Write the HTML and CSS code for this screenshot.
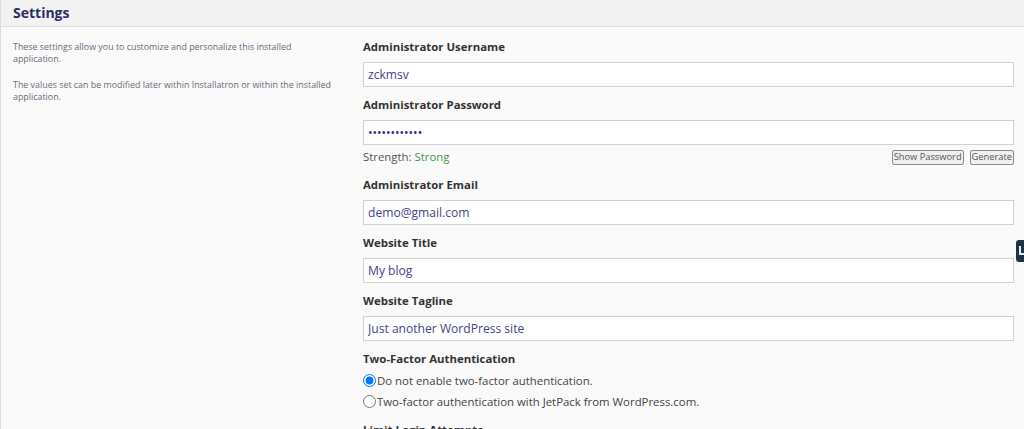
FILE: index.html
```html
<!DOCTYPE html>
<html lang="en">
<head>
    <meta charset="UTF-8">
    <meta name="viewport" content="width=device-width, initial-scale=1.0">
    <title>Settings</title>
    <link rel="stylesheet" href="styles.css">
</head>
<body>
    <div class="panel">
        <div class="panel-header">
            <h2>Settings</h2>
        </div>

        <div class="panel-body">
            <div class="description">
                <p>These settings allow you to customize and personalize this installed application.</p>
                <p>The values set can be modified later within Installatron or within the installed application.</p>
            </div>

            <div class="fields">
                <div class="field">
                    <label for="admin-user">Administrator Username</label>
                    <input type="text" id="admin-user" value="zckmsv">
                </div>

                <div class="field">
                    <label for="admin-pass">Administrator Password</label>
                    <input type="password" id="admin-pass" value="demopassword">
                    <div class="strength-row">
                        <span>Strength: <span class="strong">Strong</span></span>
                        <div class="pass-buttons">
                            <button type="button">Show Password</button>
                            <button type="button">Generate</button>
                        </div>
                    </div>
                </div>

                <div class="field">
                    <label for="admin-email">Administrator Email</label>
                    <input type="text" id="admin-email" value="demo@gmail.com">
                </div>

                <div class="field">
                    <label for="site-title">Website Title</label>
                    <input type="text" id="site-title" value="My blog">
                </div>

                <div class="field">
                    <label for="site-tagline">Website Tagline</label>
                    <input type="text" id="site-tagline" value="Just another WordPress site">
                </div>

                <div class="field">
                    <label>Two-Factor Authentication</label>
                    <div class="radio-list">
                        <div class="radio-row">
                            <input type="radio" name="twofa" id="twofa-off" checked>
                            <span>Do not enable two-factor authentication.</span>
                        </div>
                        <div class="radio-row">
                            <input type="radio" name="twofa" id="twofa-jetpack">
                            <span>Two-factor authentication with JetPack from WordPress.com.</span>
                        </div>
                    </div>
                </div>

                <div class="field">
                    <label>Limit Login Attempts</label>
                </div>
            </div>
        </div>
    </div>

    <div class="side-tab"><span class="side-tab-icon"></span></div>
</body>
</html>
```

FILE: styles.css
```css
body {
    margin: 0;
    font-family: 'Open Sans', 'Noto Sans', sans-serif;
    background-color: #fafafa;
    color: #333;
    overflow: hidden;
    height: 429px;
}

.panel {
    border-left: 1px solid #dcdcdc;
    height: 429px;
    overflow: hidden;
}

.panel-header {
    background-color: #f2f2f2;
    border-bottom: 1px solid #dedede;
    height: 26px;
    padding: 0 12px;
}

.panel-header h2 {
    margin: 0;
    font-size: 14px;
    line-height: 25px;
    font-weight: bold;
    color: #2b2c6b;
}

.panel-body {
    display: flex;
    padding: 12px 10px 0 12px;
}

.description {
    width: 322px;
    margin-right: 28px;
    flex-shrink: 0;
    padding-top: 2px;
}

.description p {
    margin: 0 0 15px 0;
    font-size: 8.9px;
    line-height: 11.5px;
    color: #6b6b78;
}

.fields {
    flex: 1;
}

.field {
    margin-bottom: 10px;
}

.field label {
    display: block;
    font-size: 11.4px;
    font-weight: bold;
    line-height: 16px;
    color: #333;
    margin-bottom: 7px;
}

.field input[type="text"],
.field input[type="password"] {
    display: block;
    box-sizing: border-box;
    width: 100%;
    height: 25px;
    padding: 0 4px;
    border: 1px solid #d2d2d2;
    background-color: white;
    font-family: inherit;
    font-size: 12.1px;
    color: #44448a;
    outline: none;
}

.field input[type="password"] {
    font-size: 12px;
    color: #2a2a80;
}

.strength-row {
    display: flex;
    justify-content: space-between;
    align-items: center;
    margin-top: 4px;
    margin-bottom: 12px;
    font-size: 11.4px;
    line-height: 16px;
    color: #555;
}

.strong {
    color: #3c9a4a;
}

.pass-buttons {
    display: flex;
    gap: 6px;
}

.pass-buttons button {
    font-family: inherit;
    font-size: 9.3px;
    height: 15px;
    padding: 0 1px;
    line-height: 12px;
    border: 1px solid #8a8a8a;
    border-radius: 2px;
    background-color: #efefef;
    color: #555;
    cursor: pointer;
}

.radio-list {
    margin-top: -4px;
}

.radio-row {
    display: flex;
    align-items: center;
    height: 21px;
    font-size: 11.4px;
    color: #444;
}

.radio-row input {
    margin: 0 1px 0 0;
    width: 13px;
    height: 13px;
}

.side-tab {
    position: absolute;
    top: 240px;
    right: -6px;
    width: 14px;
    height: 22px;
    border-radius: 3px;
    background-color: #1f3346;
}

.side-tab-icon {
    position: absolute;
    top: 6px;
    left: 3px;
    width: 5px;
    height: 7px;
    border-left: 2px solid #e8eef3;
    border-bottom: 2px solid #e8eef3;
}
```
